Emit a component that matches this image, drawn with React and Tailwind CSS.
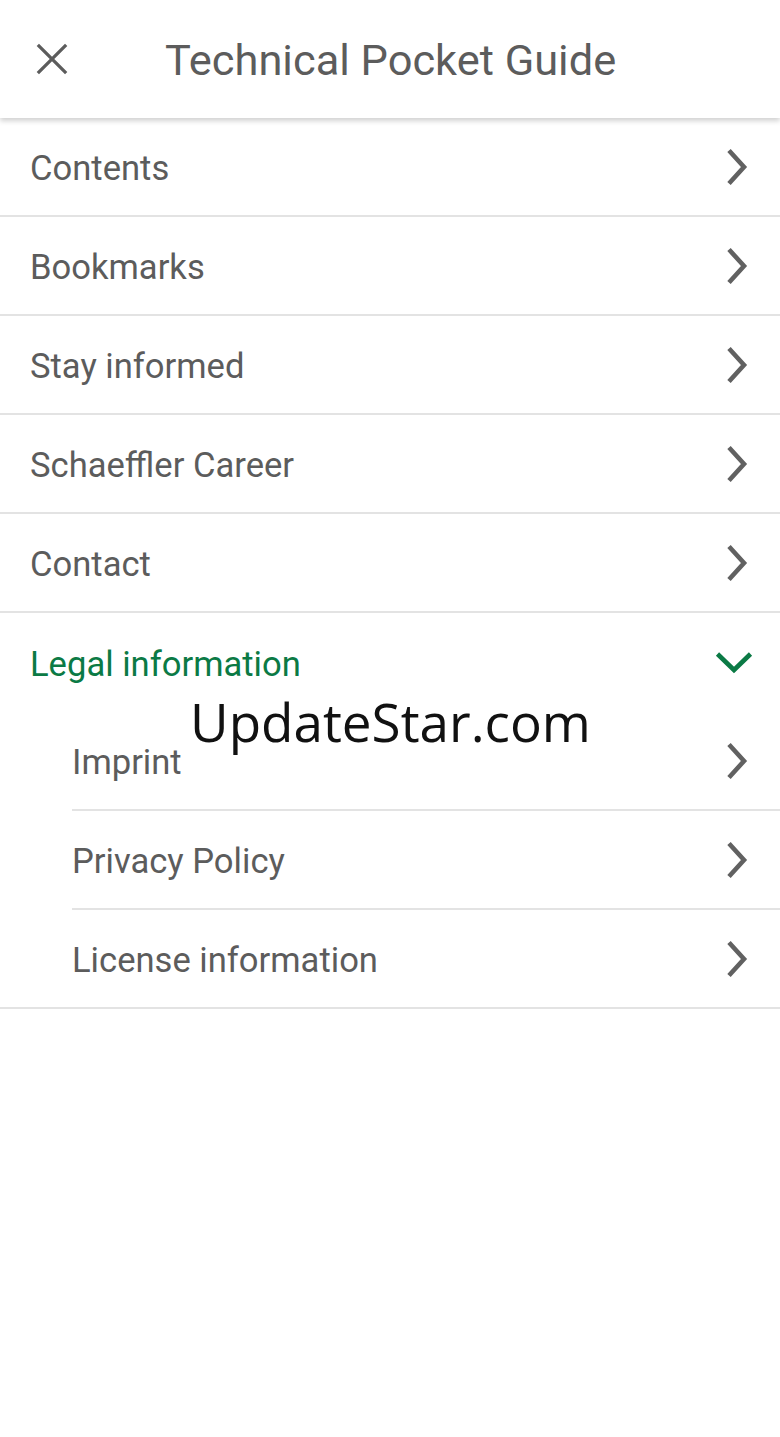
import React from "react";

const Chevron = () => (
  <svg width="26" height="40" viewBox="0 0 26 40" fill="none" stroke="#616161" strokeWidth="4.6" className="shrink-0">
    <path d="M5 3.5L20 20 5 36.5" />
  </svg>
);

const ChevronDown = () => (
  <svg width="40" height="30" viewBox="0 0 40 30" fill="none" stroke="#0b7a45" strokeWidth="4.6" className="shrink-0">
    <path d="M3.5 6L20 22 36.5 6" />
  </svg>
);

const Row = ({ label, sub, last }) => (
  <div className={sub ? "pl-[72px]" : ""}>
    <div
      className={
        "flex items-center justify-between pr-[30px] border-[#e3e3e3] " +
        (sub ? "" : "pl-[30px] ") +
        (last ? "h-[97px]" : "h-[99px] border-b-2")
      }
    >
      <span className="pt-[5px] text-[34.6px] text-[#5c5c5c]">{label}</span>
      <Chevron />
    </div>
  </div>
);

export default function App() {
  const items = ["Contents", "Bookmarks", "Stay informed", "Schaeffler Career", "Contact"];
  return (
    <div
      className="relative min-h-[1437px] w-full bg-white"
      style={{ fontFamily: "Roboto, 'Liberation Sans', sans-serif" }}
    >
      <header className="relative z-10 flex h-[118px] items-center bg-white shadow-[0_3px_5px_rgba(0,0,0,0.18)]">
        <svg width="34" height="34" viewBox="0 0 24 24" className="ml-[35px]" stroke="#5c5c5c" strokeWidth="2.3" fill="none">
          <path d="M2 2l20 20M22 2L2 22" />
        </svg>
        <h1 className="ml-[96px] pt-[4px] text-[43.4px] text-[#5c5c5c]">Technical Pocket Guide</h1>
      </header>

      <div>
        {items.map((t) => (
          <Row key={t} label={t} />
        ))}
        <div className="flex h-[99px] items-center justify-between pl-[30px] pr-[26px]">
          <span className="pt-[5px] text-[34.6px] text-[#0b7a45]">Legal information</span>
          <ChevronDown />
        </div>
        <Row label="Imprint" sub />
        <Row label="Privacy Policy" sub />
        <Row label="License information" sub last />
        <div className="border-b-2 border-[#e3e3e3]" />
      </div>

      <div
        className="pointer-events-none absolute left-[190px] top-[682px] text-[53px] text-[#111]"
        style={{ fontFamily: "'Open Sans', sans-serif" }}
      >
        UpdateStar.com
      </div>
    </div>
  );
}
